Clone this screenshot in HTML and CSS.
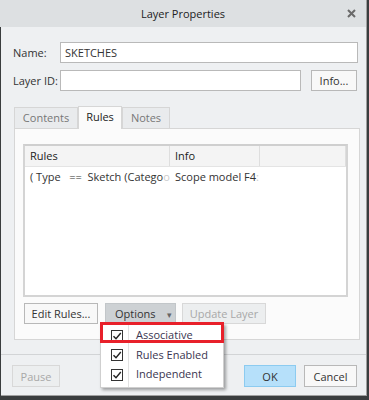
FILE: index.html
```html
<!DOCTYPE html>
<html lang="en">
<head>
    <meta charset="UTF-8">
    <title>Layer Properties</title>
    <link rel="stylesheet" href="styles.css">
</head>
<body>
    <div class="dialog">
        <div class="titlebar">
            <span class="title">Layer Properties</span>
            <span class="close"><svg width="9" height="9" viewBox="0 0 9 9"><path d="M1 1 L8 8 M8 1 L1 8" stroke="#6a6a6a" stroke-width="2"/></svg></span>
        </div>

        <div class="content">
            <div class="row">
                <label>Name:</label>
                <input class="field name-field" type="text" value="SKETCHES">
            </div>
            <div class="row">
                <label>Layer ID:</label>
                <input class="field id-field" type="text">
                <button class="btn info-btn">Info...</button>
            </div>

            <div class="tabs">
                <div class="tab tab-contents">Contents</div>
                <div class="tab tab-rules active">Rules</div>
                <div class="tab tab-notes">Notes</div>
            </div>

            <div class="panel">
                <div class="list">
                    <div class="list-head">
                        <div class="col col-rules">Rules</div>
                        <div class="col col-info">Info</div>
                        <div class="col col-rest"></div>
                    </div>
                    <div class="list-row">
                        <div class="col col-rules">( Type &nbsp; == &nbsp;Sketch (Catego<span class="fade">o</span></div>
                        <div class="col col-info">Scope model F4<span class="fade">:</span></div>
                    </div>
                </div>

                <div class="panel-buttons">
                    <button class="btn edit-btn">Edit Rules...</button>
                    <button class="btn options-btn">Options <span class="arrow">&#9662;</span></button>
                    <button class="btn update-btn" disabled>Update Layer</button>
                </div>
            </div>
        </div>

        <div class="footer">
            <button class="btn pause-btn" disabled>Pause</button>
            <div class="spacer"></div>
            <button class="btn ok-btn">OK</button>
            <button class="btn cancel-btn">Cancel</button>
        </div>

        <div class="menu">
            <div class="menu-item">
                <span class="check"><svg width="10" height="10" viewBox="0 0 10 10"><path d="M1.5 5.2 L4 7.8 L8.8 2" fill="none" stroke="#222" stroke-width="1.4"/></svg></span>
                <span class="menu-text">Associative</span>
            </div>
            <div class="menu-item">
                <span class="check"><svg width="10" height="10" viewBox="0 0 10 10"><path d="M1.5 5.2 L4 7.8 L8.8 2" fill="none" stroke="#222" stroke-width="1.4"/></svg></span>
                <span class="menu-text">Rules Enabled</span>
            </div>
            <div class="menu-item">
                <span class="check"><svg width="10" height="10" viewBox="0 0 10 10"><path d="M1.5 5.2 L4 7.8 L8.8 2" fill="none" stroke="#222" stroke-width="1.4"/></svg></span>
                <span class="menu-text">Independent</span>
            </div>
            <div class="menu-divider"></div>
        </div>
        <div class="highlight"></div>
    </div>
</body>
</html>
```

FILE: styles.css
```css
body{
    margin: 0;
    background-color: #3a3d3e;
    font-family: "Open Sans", "Noto Sans", sans-serif;
    font-size: 11px;
    color: #333;
    height: 400px;
    overflow: hidden;
}

.dialog{
    position: relative;
    width: 366px;
    height: 396px;
    margin-left: 1px;
    background-color: #eef0f2;
    border-right: 1px solid #a0a0a0;
    border-bottom: 1px solid #a0a0a0;
    box-sizing: border-box;
}

.titlebar{
    height: 27px;
    margin-left: -1px;
    background-color: #dde0e2;
    display: flex;
    align-items: center;
    justify-content: center;
    position: relative;
}

.title{
    font-size: 11px;
    color: #222;
}

.close{
    position: absolute;
    right: 10px;
    top: 9px;
    display: flex;
}

.content{
    padding: 15px 8px 0 12px;
}

.row{
    display: flex;
    align-items: center;
    height: 21px;
    margin-bottom: 7px;
}

.row label{
    width: 47px;
}

.field{
    height: 21px;
    box-sizing: border-box;
    border: 1px solid #b9b9b9;
    background-color: #fff;
    padding: 0 4px;
    font-family: inherit;
    font-size: 11px;
    color: #333;
    outline: none;
}

.name-field{
    width: 298px;
}

.id-field{
    width: 241px;
    margin-right: 10px;
}

.btn{
    height: 21px;
    box-sizing: border-box;
    border: 1px solid #b8b8b8;
    background-color: #f8f8f8;
    font-family: inherit;
    font-size: 11px;
    color: #333;
    padding: 0;
}

.btn:disabled{
    color: #a8a8a8;
    border-color: #d8d8d8;
    background-color: #eceeef;
}

.info-btn{
    width: 46px;
}

.tabs{
    display: flex;
    align-items: flex-end;
    margin-top: 15px;
    height: 22px;
    padding-left: 1px;
}

.tab{
    height: 21px;
    box-sizing: border-box;
    border: 1px solid #d6d6d6;
    border-bottom: none;
    background-color: #e9ebed;
    color: #777;
    text-align: center;
    line-height: 20px;
}

.tab-contents{
    width: 64px;
}

.tab-rules{
    width: 44px;
}

.tab-notes{
    width: 48px;
}

.tab.active{
    height: 23px;
    background-color: #fbfbfb;
    color: #222;
    margin-bottom: -1px;
    position: relative;
}

.panel{
    width: 346px;
    height: 212px;
    box-sizing: border-box;
    margin-left: 1px;
    border: 1px solid #d6d6d6;
    background-color: #fbfbfb;
    padding: 15px 11px 0 8px;
}

.list{
    height: 153px;
    box-sizing: border-box;
    border: 2px solid #d4d4d4;
    border-top-color: #cfcfcf;
    background-color: #fff;
}

.list-head{
    display: flex;
    height: 20px;
    background-color: #f4f4f4;
    border-bottom: 1px solid #e4e4e4;
    color: #222;
}

.list-head .col{
    border-right: 1px solid #dedede;
}

.list-row{
    display: flex;
    height: 19px;
}

.col{
    box-sizing: border-box;
    padding-left: 5px;
    line-height: 19px;
    white-space: nowrap;
    overflow: hidden;
}

.col-rules{
    width: 145px;
}

.col-info{
    width: 90px;
}

.col-rest{
    flex: 1;
}

.fade{
    color: #ccc;
}

.panel-buttons{
    display: flex;
    margin-top: 6px;
    padding-left: 1px;
}

.edit-btn{
    width: 74px;
    margin-right: 7px;
}

.options-btn{
    width: 71px;
    margin-right: 6px;
    background-color: #cdd1d4;
    border-color: #c2c6c9;
    text-align: left;
    padding-left: 9px;
}

.arrow{
    font-size: 9px;
    color: #666;
    margin-left: 9px;
}

.update-btn{
    width: 84px;
}

.footer{
    display: flex;
    margin-top: 14px;
    border-top: 1px solid #d2d4d6;
    padding: 10px 9px 0 11px;
}

.spacer{
    flex: 1;
}

.pause-btn{
    width: 48px;
    height: 22px;
}

.ok-btn{
    width: 52px;
    height: 22px;
    margin-right: 8px;
    background-color: #b6e0fa;
    border-color: #8ccbf0;
}

.cancel-btn{
    width: 53px;
    height: 22px;
}

.menu{
    position: absolute;
    left: 99px;
    top: 323px;
    width: 124px;
    padding: 2px 0 2px;
    background-color: #fff;
    border: 1px solid #cfcfcf;
    box-sizing: border-box;
    box-shadow: 2px 2px 3px rgba(0, 0, 0, 0.35);
}

.menu-divider{
    position: absolute;
    left: 27px;
    top: 0;
    bottom: 0;
    width: 1px;
    background-color: #e2e2e2;
}

.menu-item{
    display: flex;
    align-items: center;
    height: 19.5px;
    line-height: 14px;
}

.check{
    width: 10px;
    height: 10px;
    border: 1px solid #333;
    margin-left: 10px;
    margin-right: 12px;
    display: flex;
}

.menu-text{
    padding-left: 1px;
    margin-top: -1px;
    color: #3a3550;
}

.highlight{
    position: absolute;
    left: 99px;
    top: 322px;
    width: 124px;
    height: 21px;
    box-sizing: border-box;
    border: 3px solid #e8202a;
}
```
